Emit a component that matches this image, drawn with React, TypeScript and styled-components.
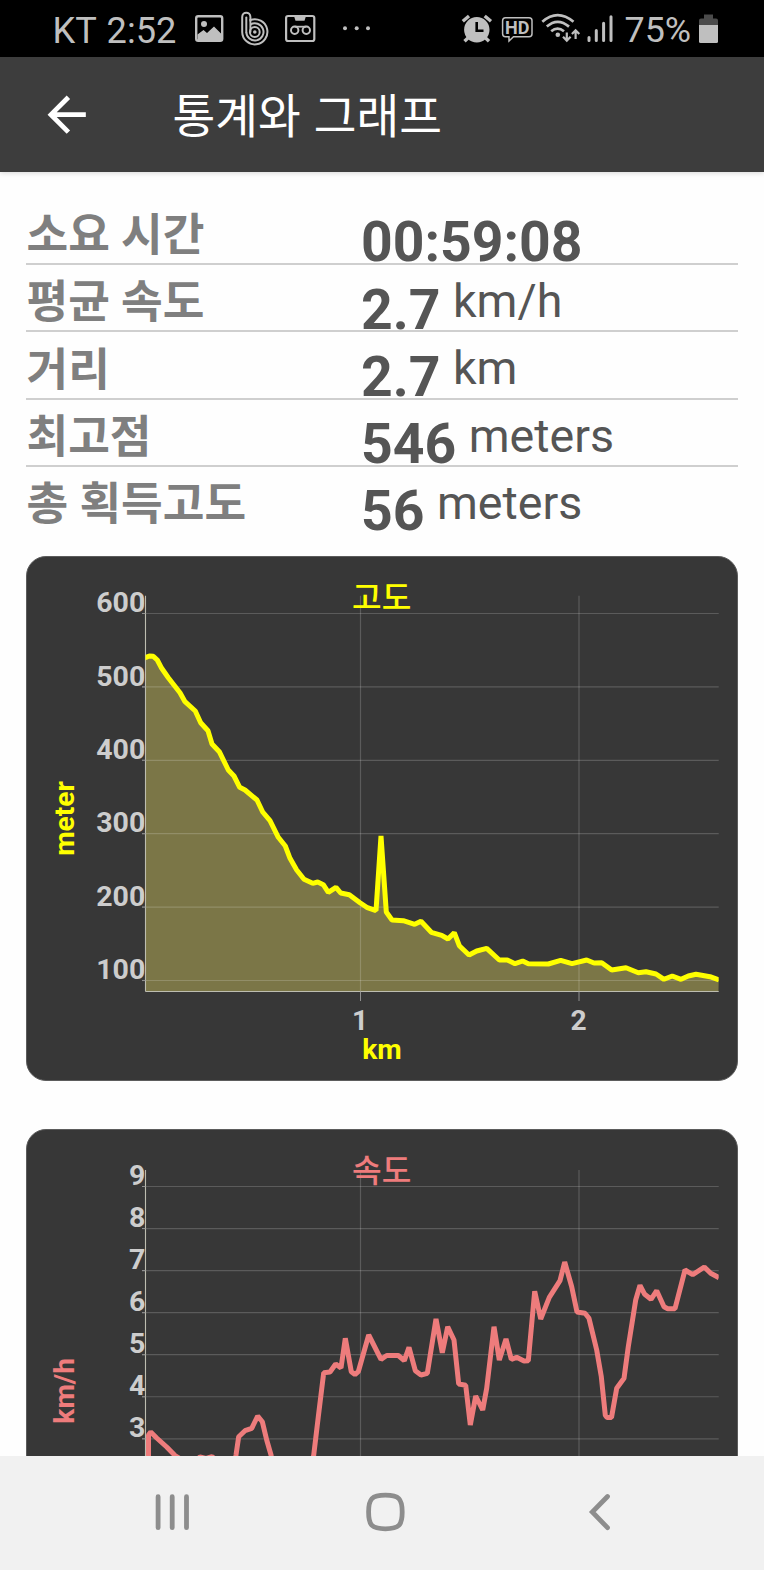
import React from 'react';
import styled, { createGlobalStyle } from 'styled-components';

const GlobalStyle = createGlobalStyle`
  * { box-sizing: border-box; }
  body { margin: 0; background: #fefefe; }
`;

const Screen = styled.div`
  width: 764px;
  height: 1570px;
  display: flex;
  flex-direction: column;
  overflow: hidden;
  background: #fefefe;
  font-family: Roboto, 'Noto Sans CJK KR', sans-serif;
`;

const StatusBar = styled.header`
  flex: none;
  height: 57px;
  display: flex;
  align-items: center;
  background: #000;
  color: #bfbfbf;
  padding: 0 45px 0 52.5px;
  justify-content: space-between;
  white-space: nowrap;
`;

const StatusGroup = styled.div`
  display: flex;
  align-items: center;
  height: 57px;
`;

const StatusText = styled.span<{ $width: number; $size: number; $indent?: number }>`
  width: ${(p) => p.$width}px;
  padding-left: ${(p) => p.$indent ?? 0}px;
  font-size: ${(p) => p.$size}px;
  word-spacing: 1.5px;
  line-height: 57px;
  padding-top: 3px;
`;

const StatusIcon = styled.svg<{ $gap?: number }>`
  display: block;
  flex: none;
  height: 57px;
  margin-left: ${(p) => p.$gap ?? 0}px;
  overflow: visible;
`;

const AppBar = styled.div`
  flex: none;
  height: 115px;
  display: flex;
  align-items: center;
  background: #3d3d3d;
  color: #fff;
  padding-left: 38px;
  box-shadow: 0 1px 5px rgba(0, 0, 0, 0.16);
`;

const BackArrow = styled.svg`
  width: 57.4px;
  height: 57.4px;
  margin-right: 77px;
`;

const Title = styled.h1`
  margin: 0;
  font-size: 46.5px;
  font-weight: 400;
  line-height: 60px;
  word-spacing: 1.5px;
  padding-top: 4px;
`;

const Content = styled.main`
  flex: 1;
  min-height: 0;
  overflow: hidden;
  padding: 26px 26px 0;
`;

const StatList = styled.dl`
  margin: 0;
  height: 358px;
`;

const StatRow = styled.div`
  height: 67.2px;
  display: flex;
  align-items: flex-start;
  border-bottom: 2px solid #cfcfcf;
  &:last-child { border-bottom: 0; }
`;

const StatLabel = styled.dt`
  width: 335px;
  height: 65px;
  color: #7f7f7f;
  font-size: 45.3px;
  font-weight: 700;
  line-height: 66px;
  padding: 5.2px 0 0 0.5px;
`;

const StatValue = styled.dd`
  margin: 0;
  display: flex;
  color: #555;
`;

const Amount = styled.span`
  font-size: 55.3px;
  font-weight: 700;
  line-height: 65px;
  padding-top: 12.4px;
  height: 65px;
`;

const Unit = styled.span`
  font-size: 46.6px;
  line-height: 66px;
  padding-top: 3px;
  margin-left: 12.5px;
  height: 65px;
`;

const ChartCard = styled.section`
  height: 525px;
  margin-bottom: 48px;
  background: #373737;
  border: 1px solid #5c5c5c;
  border-radius: 20px;
  overflow: hidden;
`;

const ChartSvg = styled.svg`
  display: block;
  width: 712px;
  height: 525px;
  margin: -1px;
`;

const NavBar = styled.nav`
  flex: none;
  height: 114px;
  background: #f1f1f1;
  display: flex;
  align-items: center;
  justify-content: space-between;
  padding: 0 143.5px 3px 149.6px;
`;

const NavIcon = styled.svg`
  width: 44px;
  height: 44px;
  fill: none;
  stroke: #8d8d8d;
  stroke-width: 4.8;
  stroke-linecap: round;
`;

const stats = [
  { label: '소요 시간', value: '00:59:08', unit: '' },
  { label: '평균 속도', value: '2.7', unit: 'km/h' },
  { label: '거리', value: '2.7', unit: 'km' },
  { label: '최고점', value: '546', unit: 'meters' },
  { label: '총 획득고도', value: '56', unit: 'meters' },
];

const altitudeLine =
  '143,658.5 146,657.3 149.3,656 153.3,656.3 157.3,660 161.7,668.3 168.3,677.7 180,692.7 185,701.7 195.3,711 200.7,722.7 208,730.7 212,744 219.3,751.7 228.3,770 234,776 239.7,787.3 245,790 257,800 262.7,812 270,820.7 278.3,837.3 285.3,846 290,858.3 296.7,870 304,879.3 312.7,883.3 317.7,882 323.3,884.7 328.3,892.3 336,887.3 340.7,893 349.3,894.7 360,902.7 366.7,907.3 376,910.7 381,836 386.3,912 392,920 403.3,920.7 414.7,924.3 421,921.3 431.3,932.3 441.7,935.3 448,939 454.3,932.7 459.3,945.7 469,955 476.7,951 486.7,948.3 499.3,960 507.3,960 515,963.7 522.7,961 528.3,963.7 548.3,964 560.7,960.3 572,963.7 586.7,960 594,963 601.7,962.7 611.7,970 626,967.7 638.3,972.7 646,971.7 656,974 664,979.3 672.3,976 681,979.3 688.3,976 696,974.3 710,976.7 719,980';

const speedLine =
  '148.5,1480 148.5,1435 150.7,1432 156.7,1438 166.7,1447 175,1455.5 190,1465 200,1457 206,1458.5 212,1456.5 220,1464 233,1475 236,1455 238.7,1436.7 245,1430.7 251.7,1428.3 257.7,1416 262.3,1421.7 266.7,1440 271.3,1456 277,1475 308,1475 313.7,1455.3 318.3,1416.7 323.7,1372.7 330,1372 335.7,1364 341,1368 345.3,1338.3 351.3,1371.7 355,1374.5 358.3,1371.7 368.7,1335 381,1359.3 386.7,1355.5 398.3,1355.5 404.3,1360.7 409,1347.3 415.3,1370.7 421,1375 427.3,1373.3 436,1319 442.3,1352.7 447.7,1326.7 454,1340 458.7,1384 465.7,1385.3 470.3,1425 475.7,1396 482.7,1410 486.7,1388.3 494,1326.7 499.3,1360 506,1339 511.3,1359.3 516.7,1357.3 524,1361 528.3,1360.7 534.7,1291.3 540.7,1319 549.3,1297.3 560,1280.7 564.7,1262 571.7,1286.7 577,1312 585,1313.3 589,1318.3 596.7,1350 601.3,1376.7 605.3,1415.3 607,1417.5 611.5,1417.5 616.7,1388.3 624,1378.3 628.3,1346.7 635.7,1300 640,1285.3 644.7,1294.3 651,1299.3 656.7,1290.7 664,1306.7 667.7,1308.7 675,1308.7 685,1270 692.7,1274.7 704.3,1267 710.7,1273.3 719,1277.7';

interface ChartProps {
  top: number;
  title: string;
  unit: string;
  unitY: number;
  color: string;
  plotTop: number;
  plotBottom: number;
  ticks: { label: string; y: number }[];
  line: string;
  filled?: boolean;
  distanceAxis?: boolean;
}

const PLOT_LEFT = 145.5;
const PLOT_RIGHT = 718.7;
const kmTicks = [
  { label: '1', x: 360.5 },
  { label: '2', x: 579 },
];

function Chart(p: ChartProps) {
  const clip = `plot-${p.top}`;
  return (
    <ChartCard>
      <ChartSvg viewBox={`26 ${p.top} 712 525`} fontFamily="Roboto, 'Noto Sans CJK KR', sans-serif">
        <clipPath id={clip}>
          <rect x={PLOT_LEFT} y={p.plotTop} width={PLOT_RIGHT - PLOT_LEFT} height={p.plotBottom - p.plotTop} />
        </clipPath>
        {p.filled && (
          <polygon
            points={`${p.line} ${PLOT_RIGHT},${p.plotBottom} 143,${p.plotBottom}`}
            clipPath={`url(#${clip})`}
            fill="#7b7647"
          />
        )}
        <g stroke="#fff" strokeOpacity={0.18} strokeWidth={1.2}>
          {p.ticks.map((t) => (
            <line key={t.label} x1={142} x2={PLOT_RIGHT} y1={t.y} y2={t.y} />
          ))}
          {kmTicks.map((t) => (
            <line key={t.label} x1={t.x} x2={t.x} y1={p.plotTop} y2={p.plotBottom} />
          ))}
        </g>
        <g stroke="#bdbdb0" strokeWidth={1.1}>
          <line x1={PLOT_LEFT} x2={PLOT_LEFT} y1={p.plotTop} y2={p.plotBottom} />
          {p.ticks.map((t) => (
            <line key={t.label} x1={142} x2={PLOT_LEFT} y1={t.y} y2={t.y} stroke="#8f8f8f" />
          ))}
        </g>
        <text x={381.7} y={p.top + 53} textAnchor="middle" fontSize={32.2} fontWeight={500} fill={p.color}>
          {p.title}
        </text>
        <polyline
          points={p.line}
          clipPath={`url(#${clip})`}
          fill="none"
          stroke={p.color}
          strokeWidth={5}
          strokeLinejoin="bevel"
        />
        <g fill="#cdcdcd" fontSize={28.5} fontWeight={700}>
          {p.ticks.map((t) => (
            <text key={t.label} x={145.3} y={t.y - 1.4} textAnchor="end">
              {t.label}
            </text>
          ))}
        </g>
        <g fill={p.color} fontSize={28.2} fontWeight={700} textAnchor="middle">
          <text transform={`translate(74.2 ${p.unitY}) rotate(-90)`}>{p.unit}</text>
        </g>
        {p.distanceAxis && (
          <g fontSize={28.2} fontWeight={700} textAnchor="middle">
            <line
              x1={PLOT_LEFT}
              x2={PLOT_RIGHT}
              y1={p.plotBottom}
              y2={p.plotBottom}
              stroke="#bdbdb0"
              strokeWidth={1.1}
            />
            {kmTicks.map((t) => (
              <React.Fragment key={t.label}>
                <line x1={t.x} x2={t.x} y1={p.plotBottom} y2={p.plotBottom + 9.5} stroke="#8f8f8f" />
                <text x={t.x - 0.4} y={p.plotBottom + 38} fill="#cdcdcd">
                  {t.label}
                </text>
              </React.Fragment>
            ))}
            <text x={382} y={p.plotBottom + 67} fill={p.color}>
              km
            </text>
          </g>
        )}
      </ChartSvg>
    </ChartCard>
  );
}

const altitudeTicks = ['600', '500', '400', '300', '200', '100'].map((label, i) => ({
  label,
  y: 613.5 + i * 73.4,
}));
const speedTicks = ['9', '8', '7', '6', '5', '4', '3'].map((label, i) => ({
  label,
  y: 1186.5 + i * 42.05,
}));

function LeftStatusIcons() {
  return (
    <>
      <StatusIcon width={29} viewBox="195 0 29 57" $gap={18.5}>
        <rect x="196.2" y="16.2" width="26" height="24.6" rx="2" fill="none" stroke="#bfbfbf" strokeWidth="2.4" />
        <circle cx="204" cy="24" r="3" fill="#bfbfbf" />
        <path d="M197.5 34.5L203.5 30L207 33L214 26.5L221 33.5V40H197.5Z" fill="#bfbfbf" />
      </StatusIcon>
      <StatusIcon width={28} viewBox="241 0 28 57" $gap={17}>
        <g fill="none" stroke="#bfbfbf" strokeWidth="2">
          <path d="M242.2 32V17C242.2 11.2 250.4 11.2 250.4 17V20A12.6 12.6 0 1 1 242.2 32" />
          <path d="M246.3 32V17.5" strokeLinecap="round" />
          <path d="M250.4 19V32.5" />
          <path d="M246.3 32A8.6 8.6 0 1 0 250.4 24.6" />
          <circle cx="254.8" cy="32" r="4.9" />
        </g>
        <circle cx="254.8" cy="32" r="1.8" fill="#bfbfbf" />
      </StatusIcon>
      <StatusIcon width={31} viewBox="285 0 31 57" $gap={16}>
        <g fill="none" stroke="#bfbfbf">
          <rect x="286.1" y="16" width="28.2" height="25" rx="2" strokeWidth="2.2" />
          <circle cx="294.7" cy="30.3" r="3.7" strokeWidth="2" />
          <circle cx="306.3" cy="30.3" r="3.7" strokeWidth="2" />
          <path d="M294.7 26.7H306.3" strokeWidth="1.8" />
        </g>
        <path d="M294 16H306L304.5 20.8H295.5Z" fill="#bfbfbf" />
      </StatusIcon>
      <StatusIcon width={30} viewBox="343 0 30 57" $gap={27}>
        <g fill="#bfbfbf">
          <circle cx="345" cy="28.3" r="2" />
          <circle cx="356.7" cy="28.3" r="2" />
          <circle cx="368" cy="28.3" r="2" />
        </g>
      </StatusIcon>
    </>
  );
}

function RightStatusIcons() {
  return (
    <>
      <StatusIcon width={30} viewBox="462 0 30 57">
        <circle cx="476.8" cy="29.7" r="12.7" fill="#bfbfbf" />
        <g fill="none" stroke="#bfbfbf" strokeWidth="3.4">
          <path d="M462.8 21.3L469 16" />
          <path d="M484.7 16L491 21.3" />
          <path d="M468.5 37.5L464.5 41.3M485 37.5L489 41.3" />
        </g>
        <path d="M476.7 22V30.8H483.5" fill="none" stroke="#000" strokeWidth="2.6" />
      </StatusIcon>
      <StatusIcon width={31} viewBox="502 0 31 57" $gap={10}>
        <path
          d="M505.5 17.8H529A3 3 0 0 1 532 20.8V33.7A3 3 0 0 1 529 36.7H513.5L509 41V36.7H505.5A3 3 0 0 1 502.6 33.7V20.8A3 3 0 0 1 505.5 17.8Z"
          fill="none"
          stroke="#bfbfbf"
          strokeWidth="1.5"
        />
        <text x="517.3" y="33.8" textAnchor="middle" fill="#bfbfbf" fontFamily="Roboto, sans-serif" fontSize="18" fontWeight="700">
          HD
        </text>
      </StatusIcon>
      <StatusIcon width={39} viewBox="541 0 39 57" $gap={8}>
        <g fill="none" stroke="#bfbfbf" strokeWidth="2.7">
          <path d="M542.3 21.8Q557.5 8.5 573.5 21.8" />
          <path d="M546.8 26.6Q557.5 17 569 26.6" />
          <path d="M551.2 31.2Q557.5 26 564 31.2" />
        </g>
        <circle cx="557.8" cy="34.8" r="2.3" fill="#bfbfbf" />
        <g fill="none" stroke="#bfbfbf" strokeWidth="2.2">
          <path d="M566.8 32.5V40.5M563 36.8L566.8 40.6L570.6 36.8" />
          <path d="M575.6 39V30.8M571.9 34L575.6 30.4L579.3 34" />
        </g>
      </StatusIcon>
      <StatusIcon width={26} viewBox="587 0 26 57" $gap={7}>
        <g stroke="#bfbfbf" strokeWidth="3" strokeLinecap="round">
          <path d="M589 37.5V40.5M596.3 30.5V40.5M603.6 23.2V40.5M611 16.8V40.5" />
        </g>
      </StatusIcon>
    </>
  );
}

export default function App() {
  return (
    <Screen>
      <GlobalStyle />
      <StatusBar>
        <StatusGroup>
          <StatusText $width={124} $size={36.2}>KT 2:52</StatusText>
          <LeftStatusIcons />
        </StatusGroup>
        <StatusGroup>
          <RightStatusIcons />
          <StatusText $width={80} $size={35.9} $indent={11.5}>75%</StatusText>
          <StatusIcon width={20} viewBox="699 0 20 57" $gap={6}>
            <path d="M699 25V20.5Q699 18.5 701 18.5H704V14.5H713V18.5H716Q718 18.5 718 20.5V25Z" fill="#4b4b4b" />
            <path d="M699 25H718V41.5Q718 43 716.5 43H700.5Q699 43 699 41.5Z" fill="#bfbfbf" />
          </StatusIcon>
        </StatusGroup>
      </StatusBar>
      <AppBar>
        <BackArrow viewBox="0 0 24 24" fill="#fff">
          <path d="M20 11H7.83l5.59-5.59L12 4l-8 8 8 8 1.41-1.41L7.83 13H20v-2z" />
        </BackArrow>
        <Title>통계와 그래프</Title>
      </AppBar>
      <Content>
        <StatList>
          {stats.map((s) => (
            <StatRow key={s.label}>
              <StatLabel>{s.label}</StatLabel>
              <StatValue>
                <Amount>{s.value}</Amount>
                {s.unit && <Unit>{s.unit}</Unit>}
              </StatValue>
            </StatRow>
          ))}
        </StatList>
        <Chart
          top={556}
          title="고도"
          unit="meter"
          unitY={818.5}
          color="#ffff00"
          plotTop={595.7}
          plotBottom={991.5}
          ticks={altitudeTicks}
          line={altitudeLine}
          filled
          distanceAxis
        />
        <Chart
          top={1129}
          title="속도"
          unit="km/h"
          unitY={1390.8}
          color="#ee7c7c"
          plotTop={1170}
          plotBottom={1565}
          ticks={speedTicks}
          line={speedLine}
        />
      </Content>
      <NavBar>
        <NavIcon viewBox="149.6 1489.3 44 44">
          <path d="M157.7 1496V1527M171.8 1496V1527M186.1 1496V1527" />
        </NavIcon>
        <NavIcon viewBox="363.1 1489.3 44 44">
          <path d="M385.5 1494.4C399 1494.4 402.3 1498 402.3 1511.3C402.3 1524.6 399 1528.1 385.5 1528.1C372 1528.1 368.7 1524.6 368.7 1511.3C368.7 1498 372 1494.4 385.5 1494.4Z" />
        </NavIcon>
        <NavIcon viewBox="576.5 1489.3 44 44">
          <path d="M607 1495.8L591.8 1511.3L607 1527" />
        </NavIcon>
      </NavBar>
    </Screen>
  );
}
